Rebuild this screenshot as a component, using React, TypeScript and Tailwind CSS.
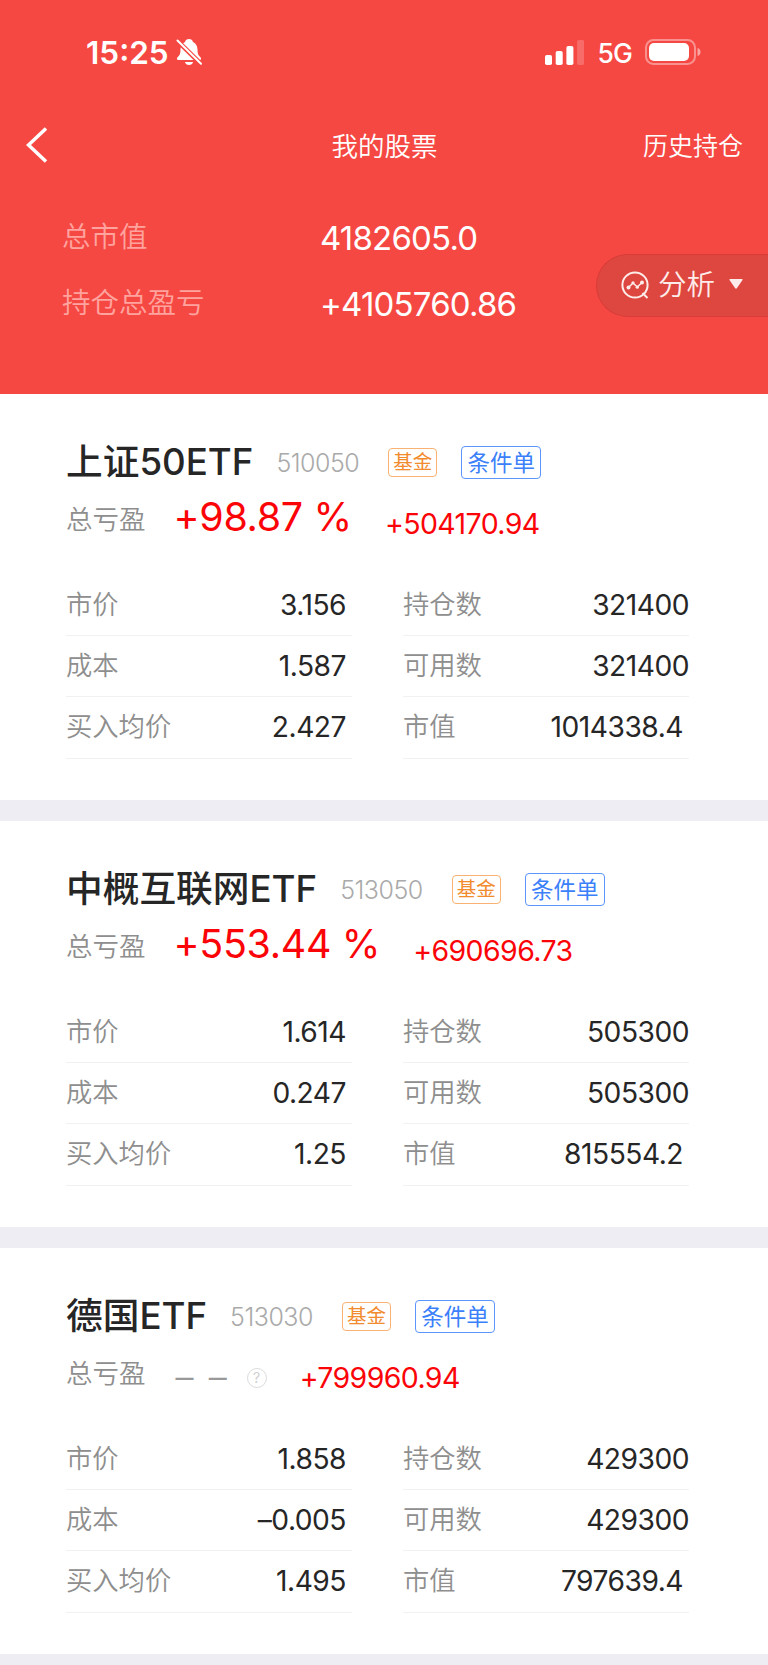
import clsx from 'clsx';

interface Holding {
  name: string;
  code: string;
  percent: string | null;
  profit: string;
  price: string;
  cost: string;
  avgPrice: string;
  total: string;
  available: string;
  marketValue: string;
}

const holdings: Holding[] = [
  {
    name: '上证50ETF',
    code: '510050',
    percent: '+98.87 %',
    profit: '+504170.94',
    price: '3.156',
    cost: '1.587',
    avgPrice: '2.427',
    total: '321400',
    available: '321400',
    marketValue: '1014338.4',
  },
  {
    name: '中概互联网ETF',
    code: '513050',
    percent: '+553.44 %',
    profit: '+690696.73',
    price: '1.614',
    cost: '0.247',
    avgPrice: '1.25',
    total: '505300',
    available: '505300',
    marketValue: '815554.2',
  },
  {
    name: '德国ETF',
    code: '513030',
    percent: null,
    profit: '+799960.94',
    price: '1.858',
    cost: '–0.005',
    avgPrice: '1.495',
    total: '429300',
    available: '429300',
    marketValue: '797639.4',
  },
];

function StatusBar() {
  return (
    <div className="flex h-[104px] items-center pr-[67px] pl-[86px]">
      <span className="pt-px text-[31.5px] leading-none font-semibold">15:25</span>
      <svg className="ml-[7px] h-[28px] w-[26px]" viewBox="0 0 26 28" fill="none">
        <path
          d="M13 1c-2 0-3.6 1.2-4 3C5.5 5.5 4.5 9 4.5 12c0 4-1 5.5-2.7 7C.4 20.3.6 22 2.5 22h21c1.9 0 2.1-1.7.7-3-1.7-1.5-2.7-3-2.7-7 0-3-1-6.5-4.5-8-.4-1.8-2-3-4-3Z"
          fill="white"
        />
        <path d="M9 24h8c-.4 1.9-1.9 3-4 3s-3.6-1.1-4-3Z" fill="white" />
        <path d="M1 2.5 25 26" stroke="#f64843" strokeWidth="4.6" />
        <path d="M1.5 2.5 25 25.8" stroke="white" strokeWidth="2" strokeLinecap="round" />
      </svg>
      <svg className="ml-auto h-[25px] w-[39px]" viewBox="0 0 39 25" fill="white">
        <rect x="0" y="15" width="7" height="10" rx="1.8" />
        <rect x="10.7" y="11" width="7" height="14" rx="1.8" />
        <rect x="21.4" y="6" width="7" height="19" rx="1.8" />
        <rect x="32.1" y="0" width="7" height="25" rx="1.8" opacity="0.2" />
      </svg>
      <span className="ml-[13px] pt-[3px] text-[26.5px] leading-none font-medium tracking-[-0.8px]">5G</span>
      <svg className="ml-[13px] h-[26px] w-[56px]" viewBox="0 0 56 26">
        <rect x="1" y="1" width="49" height="24" rx="7.5" fill="none" stroke="white" strokeOpacity="0.4" strokeWidth="2" />
        <rect x="4" y="4" width="40" height="18" rx="5" fill="white" />
        <path d="M52.5 9c2 .6 3 2 3 4s-1 3.4-3 4Z" fill="white" fillOpacity="0.5" />
      </svg>
    </div>
  );
}

function AnalysisButton() {
  return (
    <button className="absolute top-[254px] right-0 flex h-[63px] w-[172px] items-center rounded-l-full border-y-[1.5px] border-l-[1.5px] border-[#d83c38] bg-[#de473f] pl-[24px] text-[#fdecea]">
      <svg className="mb-px h-[28px] w-[28px]" viewBox="0 0 28 28" fill="none" stroke="currentColor" strokeWidth="2">
        <circle cx="14" cy="14" r="12.6" />
        <path d="m21.5 22 5 5" />
        <path d="m7.5 16.5 4.5-4.5 4.3 4 4.7-4.5" strokeWidth="1.5" />
        <g fill="currentColor" stroke="none">
          <circle cx="7.5" cy="16.5" r="2" />
          <circle cx="12" cy="11.8" r="1.6" />
          <circle cx="16.3" cy="16.2" r="1.6" />
          <circle cx="21" cy="11.5" r="2" />
        </g>
      </svg>
      <span className="ml-[9px] text-[28.5px] leading-none font-[350]">分析</span>
      <svg className="mb-[3px] ml-[14px] h-[10px] w-[14px]" viewBox="0 0 14 10" fill="currentColor">
        <path d="M1 0h12q1 0 .5 1L8 9q-1 1.5-2 0L.5 1Q0 0 1 0Z" />
      </svg>
    </button>
  );
}

function Header() {
  return (
    <header className="relative h-[394px] bg-[#f64843] text-white">
      <StatusBar />
      <div className="grid h-[82px] grid-cols-3 items-center pr-[25px] pl-[26px]">
        <svg className="h-[36px] w-[22px]" viewBox="0 0 22 36" fill="none" stroke="white" strokeWidth="3.5">
          <path d="M20 1.5 2.5 18 20 34.5" />
        </svg>
        <h1 className="pt-[2px] text-center text-[26.5px] leading-none font-[350]">我的股票</h1>
        <a className="pt-[2px] text-right text-[25px] leading-none font-[350]">历史持仓</a>
      </div>
      <dl className="pt-[18px] pl-[62px]">
        <SummaryRow label="总市值" value="4182605.0" />
        <SummaryRow label="持仓总盈亏" value="+4105760.86" />
      </dl>
      <AnalysisButton />
    </header>
  );
}

function SummaryRow({ label, value }: { label: string; value: string }) {
  return (
    <div className="flex h-[66px] items-center">
      <dt className="w-[258px] text-[28.5px] leading-none font-[350] text-[#ffa39e]">{label}</dt>
      <dd className="pt-[2px] text-[33px] leading-none font-[380] tracking-[-0.8px]">{value}</dd>
    </div>
  );
}

function Field({ label, value, inset }: { label: string; value: string; inset?: string }) {
  return (
    <div className="flex h-[61.33px] items-center justify-between border-b-[1.5px] border-[#f1f1f1]">
      <dt className="text-[26.3px] leading-none font-[350] text-[#8e8e8e]">{label}</dt>
      <dd className={clsx('text-[28.2px] leading-none font-[380] tracking-[-0.5px] text-[#262626]', inset)}>
        {value}
      </dd>
    </div>
  );
}

function HoldingCard({ item }: { item: Holding }) {
  return (
    <section className="h-[406px] bg-white pt-[38px] pr-[79px] pl-[66px]">
      <div className="flex h-[60px] items-center">
        <h2 className="text-[36.7px] leading-none font-medium text-[#262626]">{item.name}</h2>
        <span className="ml-[23px] pt-[2px] text-[25px] leading-none font-light tracking-[-0.5px] text-[#aaa]">
          {item.code}
        </span>
        <span className="ml-[29px] flex h-[29px] w-[49px] items-center justify-center rounded-[4px] border-[1.5px] border-[#f9b273] pt-[2px] text-[19.5px] leading-none text-[#f28a2e]">
          基金
        </span>
        <span className="ml-[24px] flex h-[33px] w-[80px] items-center justify-center rounded-[4px] border-[1.5px] border-[#5c95fb] pt-[2px] text-[22.5px] leading-none text-[#3c7ffa]">
          条件单
        </span>
      </div>
      <div className="flex h-[54px] items-center">
        <span className="text-[26.5px] leading-none font-[350] text-[#8e8e8e]">总亏盈</span>
        {item.percent ? (
          <span className="mr-[33px] ml-[28px] pb-[2px] text-[39.4px] leading-none font-[380] tracking-[-0.3px] text-[#fb0407]">
            {item.percent}
          </span>
        ) : (
          <>
            <span className="ml-[30px] pt-[8px] text-[36px] leading-none font-[350] [word-spacing:5px] text-[#999]">
              – –
            </span>
            <span className="mt-[10px] mr-[33px] ml-[20px] flex size-[20px] items-center justify-center rounded-full border-[1.5px] border-[#dcdcdc] text-[14px] leading-none text-[#cfcfcf]">
              ?
            </span>
          </>
        )}
        <span className="pt-[10px] text-[28.5px] leading-none font-[380] tracking-[-0.6px] text-[#fb0407]">
          {item.profit}
        </span>
      </div>
      <div className="mt-[28.7px] grid grid-cols-2 gap-x-[51px]">
        <Field label="市价" value={item.price} inset="pr-[6px]" />
        <Field label="持仓数" value={item.total} />
        <Field label="成本" value={item.cost} inset="pr-[6px]" />
        <Field label="可用数" value={item.available} />
        <Field label="买入均价" value={item.avgPrice} inset="pr-[6px]" />
        <Field label="市值" value={item.marketValue} inset="pr-[6px]" />
      </div>
    </section>
  );
}

export default function App() {
  return (
    <div className="h-[1665px] w-full overflow-hidden bg-[#eeedf3] font-['Inter','Noto_Sans_CJK_SC',sans-serif]">
      <Header />
      <main className="flex flex-col gap-[21px]">
        {holdings.map((item) => (
          <HoldingCard key={item.code} item={item} />
        ))}
      </main>
    </div>
  );
}
